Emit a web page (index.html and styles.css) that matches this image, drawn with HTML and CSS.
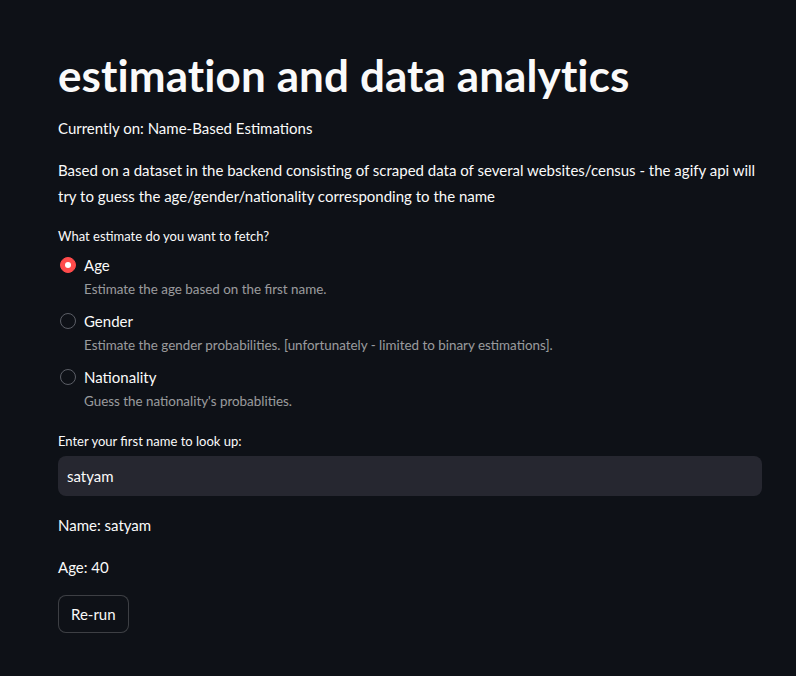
FILE: index.html
```html
<!DOCTYPE html>
<html lang="en">
<head>
<meta charset="utf-8">
<title>estimation and data analytics</title>
<link rel="stylesheet" href="styles.css">
</head>
<body>
<main class="main">
  <h1 class="title">estimation and data analytics</h1>
  <p class="text current">Currently on: Name-Based Estimations</p>
  <p class="text desc">Based on a dataset in the backend consisting of scraped data of several websites/census - the agify api will try to guess the age/gender/nationality corresponding to the name</p>

  <div class="widget radio-group">
    <div class="label">What estimate do you want to fetch?</div>
    <div class="options">
      <div class="option">
        <span class="dot checked"></span>
        <div class="opt-body">
          <div class="opt-label">Age</div>
          <div class="opt-caption">Estimate the age based on the first name.</div>
        </div>
      </div>
      <div class="option">
        <span class="dot"></span>
        <div class="opt-body">
          <div class="opt-label">Gender</div>
          <div class="opt-caption">Estimate the gender probabilities. [unfortunately - limited to binary estimations].</div>
        </div>
      </div>
      <div class="option">
        <span class="dot"></span>
        <div class="opt-body">
          <div class="opt-label">Nationality</div>
          <div class="opt-caption">Guess the nationality's probablities.</div>
        </div>
      </div>
    </div>
  </div>

  <div class="widget input-group">
    <div class="label">Enter your first name to look up:</div>
    <div class="input">satyam</div>
  </div>

  <p class="text result">Name: satyam</p>
  <p class="text result">Age: 40</p>

  <button class="btn">Re-run</button>
</main>
</body>
</html>
```

FILE: styles.css
```css
html, body {
  margin: 0;
  padding: 0;
  background: #0e1117;
  color: #fafafa;
  font-family: Lato, "Source Sans Pro", "Liberation Sans", sans-serif;
}

.main {
  width: 704px;
  padding: 47px 34px 0 58px;
  display: flex;
  flex-direction: column;
}

.title {
  margin: 0;
  font-size: 44px;
  font-weight: 700;
  line-height: 56px;
  letter-spacing: 0.1px;
}

.text {
  margin: 0;
  font-size: 15px;
  line-height: 26px;
}

.current {
  margin-top: 12px;
}

.desc {
  margin-top: 16px;
}

.widget {
  display: flex;
  flex-direction: column;
}

.label {
  font-size: 13px;
  line-height: 20px;
}

.radio-group {
  margin-top: 17px;
}

.radio-group .label {
  margin-bottom: 7px;
}

.options {
  display: flex;
  flex-direction: column;
  gap: 8px;
}

.option {
  display: flex;
  align-items: flex-start;
  gap: 8px;
  padding-left: 2px;
}

.dot {
  box-sizing: border-box;
  width: 16px;
  height: 16px;
  border-radius: 50%;
  border: 1px solid #5b5e66;
  margin-top: 4px;
  flex: none;
  display: flex;
  align-items: center;
  justify-content: center;
}

.dot.checked {
  background: #ff4b4b;
  border-color: #ff4b4b;
}

.dot.checked::after {
  content: "";
  width: 6px;
  height: 6px;
  border-radius: 50%;
  background: #fff;
}

.opt-label {
  font-size: 15px;
  line-height: 24px;
}

.opt-caption {
  font-size: 13.4px;
  line-height: 24px;
  color: rgba(250, 250, 250, 0.6);
}

.input-group {
  margin-top: 18px;
}

.input-group .label {
  margin-bottom: 5px;
}

.input {
  background: #262730;
  border-radius: 8px;
  height: 40px;
  box-sizing: border-box;
  padding: 0 9px;
  display: flex;
  align-items: center;
  font-size: 15px;
}

.result {
  margin-top: 16px;
}

.btn {
  align-self: flex-start;
  margin-top: 15px;
  box-sizing: border-box;
  height: 38px;
  padding: 0 12px;
  background: #0e1117;
  color: #fafafa;
  border: 1px solid rgba(250, 250, 250, 0.2);
  border-radius: 8px;
  font-family: inherit;
  font-size: 15px;
}
```
